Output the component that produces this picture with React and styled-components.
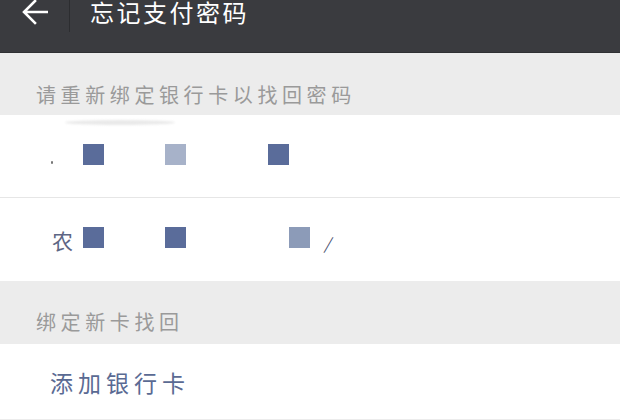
import React from "react";
import styled, { createGlobalStyle } from "styled-components";

const GlobalStyle = createGlobalStyle`
  html, body {
    margin: 0;
    padding: 0;
    background: #ececec;
    font-family: "Noto Sans CJK SC", "Noto Sans", sans-serif;
  }
`;

const Page = styled.div`
  width: 620px;
  height: 420px;
  overflow: hidden;
  background: #ececec;
`;

const Header = styled.header`
  height: 52px;
  background: #3a3b3f;
  border-bottom: 1px solid #2f3033;
  display: flex;
  align-items: flex-start;
`;

const Back = styled.div`
  width: 69px;
  height: 24px;
  display: flex;
  align-items: center;
  padding-left: 22px;
  box-sizing: border-box;
`;

const Divider = styled.div`
  width: 1px;
  height: 32px;
  background: #2c2d30;
`;

const Title = styled.h1`
  margin: 0 0 0 20px;
  font-size: 24px;
  line-height: 24px;
  font-weight: 400;
  letter-spacing: 2.5px;
  color: #fff;
`;

const Band = styled.div`
  height: ${(p) => p.$h}px;
  display: flex;
  align-items: flex-end;
  padding: 0 0 ${(p) => p.$pb}px 36px;
  box-sizing: border-box;
  font-size: 20px;
  line-height: 20px;
  letter-spacing: 4.6px;
  color: #9a9a9a;
`;

const Row = styled.div`
  height: ${(p) => p.$h}px;
  background: #fff;
  display: flex;
  align-items: center;
  padding-left: ${(p) => p.$pl}px;
  box-sizing: border-box;
  position: relative;
  border-bottom: ${(p) => (p.$line ? "1px solid #e6e6e6" : "none")};
`;

const Smudge = styled.div`
  position: absolute;
  left: 65px;
  top: 5px;
  width: 110px;
  height: 5px;
  border-radius: 50%;
  background: #e9e9e9;
  filter: blur(1px);
`;

const Dot = styled.span`
  width: 2px;
  height: 3px;
  background: #777;
  border-radius: 1px;
  margin-top: 12px;
`;

const Blot = styled.span`
  width: 21px;
  height: 21px;
  margin-left: ${(p) => p.$gap}px;
  margin-top: -4px;
  background: ${(p) => p.$c};
`;

const Bank = styled.span`
  font-size: 21px;
  line-height: 24px;
  color: #5d6684;
`;

const Slash = styled.span`
  margin-left: 16px;
  margin-top: 6px;
  font-size: 16px;
  color: #4a5270;
  transform: skewX(-15deg);
`;

const Action = styled.span`
  font-size: 23px;
  line-height: 26px;
  letter-spacing: 5px;
  color: #5a6a93;
`;

const DARK = "#5a6c9a";
const LIGHT = "#a7b2c9";
const MID = "#8c9bb8";

export default function App() {
  return (
    <Page>
      <GlobalStyle />
      <Header>
        <Back>
          <svg width="26" height="26" viewBox="0 0 26 26" fill="none">
            <path
              d="M25 13H3M13 2L2 13l11 11"
              stroke="#fff"
              strokeWidth="2.6"
              strokeLinecap="square"
            />
          </svg>
        </Back>
        <Divider />
        <Title>忘记支付密码</Title>
      </Header>
      <Band $h={62} $pb={10}>请重新绑定银行卡以找回密码</Band>
      <Row $h={83} $pl={51} $line>
        <Smudge />
        <Dot />
        <Blot $gap={30} $c={DARK} />
        <Blot $gap={61} $c={LIGHT} />
        <Blot $gap={82} $c={DARK} />
      </Row>
      <Row $h={83} $pl={52}>
        <Bank>农</Bank>
        <Blot $gap={10} $c={DARK} />
        <Blot $gap={61} $c={DARK} />
        <Blot $gap={103} $c={MID} />
        <Slash>/</Slash>
      </Row>
      <Band $h={63} $pb={12}>绑定新卡找回</Band>
      <Row $h={75} $pl={50}>
        <Action>添加银行卡</Action>
      </Row>
    </Page>
  );
}
